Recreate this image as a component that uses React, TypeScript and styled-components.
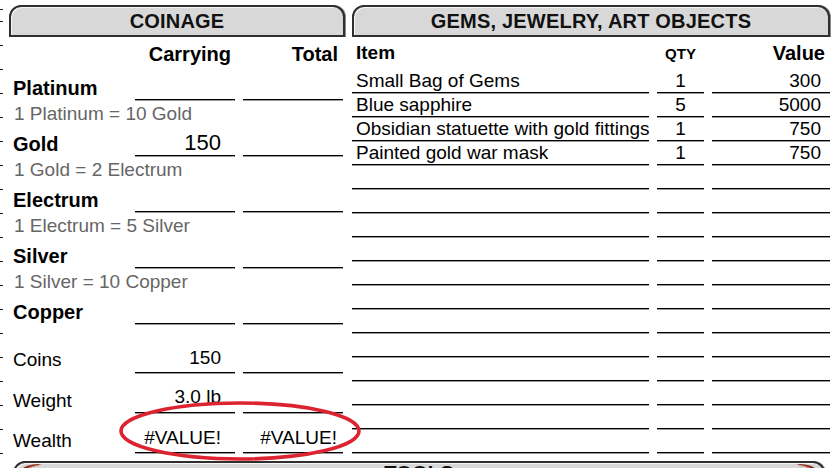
import React from 'react';
import styled, { createGlobalStyle } from 'styled-components';

const GlobalStyle = createGlobalStyle`
  html, body {
    margin: 0;
    padding: 0;
    background: #ffffff;
    width: 840px;
    height: 468px;
    overflow: hidden;
  }
  body {
    font-family: "Liberation Sans", Arial, sans-serif;
    color: #000;
  }
`;

const Page = styled.div`
  display: flex;
  width: 840px;
  height: 468px;
  overflow: hidden;
  position: relative;
`;

const TickStrip = styled.div`
  width: 3px;
  margin-right: 6px;
  flex-shrink: 0;
  background-image: repeating-linear-gradient(
    to bottom,
    #222 0,
    #222 1px,
    transparent 1px,
    transparent 24px
  );
  background-position: 0 21px;
`;

const Sheet = styled.div`
  display: flex;
  flex-direction: column;
  padding-top: 5px;
`;

const Columns = styled.div`
  display: flex;
  gap: 7px;
`;

const Panel = styled.section<{ $width: number }>`
  width: ${p => p.$width}px;
  display: flex;
  flex-direction: column;
`;

const SectionHeader = styled.div`
  box-sizing: border-box;
  height: 32px;
  background: #d8d8d8;
  border: 2px solid #2f2f2f;
  border-radius: 12px 12px 0 0;
  box-shadow: inset 1px 1px 0 #f6f6f6, 1px 0 0 #8a8a8a;
  display: flex;
  align-items: center;
  justify-content: center;
  font-weight: bold;
  font-size: 20px;
  letter-spacing: 0.2px;
  color: #111;
`;

const BottomHeader = styled(SectionHeader)`
  width: 812px;
  margin: 8px 0 0 4px;
  position: relative;
  align-items: flex-start;
  line-height: 20px;
`;

const Ornament = styled.svg<{ $side: 'left' | 'right' }>`
  position: absolute;
  top: 0;
  ${p => (p.$side === 'left' ? 'left: 4px;' : 'right: 4px; transform: scaleX(-1);')}
`;

/* ---------- coinage ---------- */

const CoinGrid = styled.div<{ $h: number; $align?: string }>`
  display: grid;
  grid-template-columns: 118px 100px 100px;
  column-gap: 8px;
  height: ${p => p.$h}px;
  align-items: ${p => p.$align || 'end'};
`;

const ColHead = styled.div<{ $pr: number }>`
  text-align: right;
  font-weight: bold;
  font-size: 20px;
  padding-right: ${p => p.$pr}px;
`;

const CoinName = styled.div<{ $bold?: boolean; $lh?: number }>`
  padding-left: 4px;
  font-size: ${p => (p.$bold ? 20 : 19)}px;
  font-weight: ${p => (p.$bold ? 'bold' : 'normal')};
  line-height: ${p => p.$lh || 24}px;
  white-space: nowrap;
`;

const Blank = styled.div<{ $pr?: number; $size?: number; $lh?: number }>`
  border-bottom: 1px solid #000;
  box-shadow: 0 1px 0 #9a9a9a;
  text-align: right;
  padding-right: ${p => p.$pr ?? 14}px;
  font-size: ${p => p.$size || 19}px;
  line-height: ${p => p.$lh || 24}px;
  min-height: ${p => p.$lh || 24}px;
  white-space: nowrap;
`;

const Rate = styled.div`
  height: 27px;
  line-height: 27px;
  padding-left: 5px;
  font-size: 19px;
  color: #666;
`;

const WealthRow = styled(CoinGrid)`
  position: relative;
`;

const Circle = styled.svg`
  position: absolute;
  left: 110px;
  top: -12px;
  overflow: visible;
  pointer-events: none;
`;

/* ---------- gems ---------- */

const ItemGrid = styled.div<{ $h: number }>`
  display: grid;
  grid-template-columns: 297px 47px 118px;
  column-gap: 8px;
  height: ${p => p.$h}px;
  align-items: end;
`;

const ItemHead = styled.div<{ $align: string; $size?: number; $pad?: string }>`
  align-self: center;
  font-weight: bold;
  font-size: ${p => p.$size || 20}px;
  text-align: ${p => p.$align};
  padding: ${p => p.$pad || '0'};
`;

const ItemCell = styled.div<{ $align: string; $pad?: string }>`
  height: 24px;
  box-sizing: border-box;
  border-bottom: 1px solid #000;
  box-shadow: 0 1px 0 #9a9a9a;
  font-size: 19px;
  line-height: 23px;
  text-align: ${p => p.$align};
  padding: ${p => p.$pad || '0'};
  white-space: nowrap;
`;

type Coin = { name: string; rate?: string; carrying?: string };

const coins: Coin[] = [
  { name: 'Platinum', rate: '1 Platinum = 10 Gold' },
  { name: 'Gold', rate: '1 Gold = 2 Electrum', carrying: '150' },
  { name: 'Electrum', rate: '1 Electrum = 5 Silver' },
  { name: 'Silver', rate: '1 Silver = 10 Copper' },
  { name: 'Copper' },
];

const items = [
  { name: 'Small Bag of Gems', qty: '1', value: '300' },
  { name: 'Blue sapphire', qty: '5', value: '5000' },
  { name: 'Obsidian statuette with gold fittings', qty: '1', value: '750' },
  { name: 'Painted gold war mask', qty: '1', value: '750' },
];

const rows = [...items, ...Array.from({ length: 12 }, () => ({ name: '', qty: '', value: '' }))];

const Swoosh: React.FC<{ side: 'left' | 'right' }> = ({ side }) => (
  <Ornament $side={side} width="24" height="8" viewBox="0 0 24 8">
    <path d="M1 8 C5 3 11 1 23 1 C16 2.5 10 4.5 7 8 Z" fill="#8a2b1c" />
    <path d="M5 8 C8 5 13 3 20 2.5" stroke="#c9876f" strokeWidth="1" fill="none" />
  </Ornament>
);

const App: React.FC = () => {
  return (
    <Page>
      <GlobalStyle />
      <TickStrip />
      <Sheet>
        <Columns>
          <Panel $width={336}>
            <SectionHeader>COINAGE</SectionHeader>
            <CoinGrid $h={34} $align="center">
              <div />
              <ColHead $pr={4}>Carrying</ColHead>
              <ColHead $pr={5}>Total</ColHead>
            </CoinGrid>

            {coins.map(c => (
              <React.Fragment key={c.name}>
                <CoinGrid $h={29}>
                  <CoinName $bold>{c.name}</CoinName>
                  <Blank $size={c.carrying ? 22 : 19}>{c.carrying}</Blank>
                  <Blank />
                </CoinGrid>
                {c.rate && <Rate>{c.rate}</Rate>}
              </React.Fragment>
            ))}

            <CoinGrid $h={49}>
              <CoinName $lh={26}>Coins</CoinName>
              <Blank $lh={28}>150</Blank>
              <Blank $lh={28} />
            </CoinGrid>
            <CoinGrid $h={40}>
              <CoinName $lh={24}>Weight</CoinName>
              <Blank $lh={30}>3.0 lb</Blank>
              <Blank $lh={30} />
            </CoinGrid>
            <WealthRow $h={40}>
              <CoinName $lh={25}>Wealth</CoinName>
              <Blank $lh={29}>#VALUE!</Blank>
              <Blank $lh={29} $pr={6}>#VALUE!</Blank>
              <Circle width="242" height="60" viewBox="0 0 242 60">
                <ellipse cx="121" cy="30" rx="119" ry="28" fill="none" stroke="#dc2430" strokeWidth="3.6" />
              </Circle>
            </WealthRow>
          </Panel>

          <Panel $width={478}>
            <SectionHeader>GEMS, JEWELRY, ART OBJECTS</SectionHeader>
            <ItemGrid $h={32}>
              <ItemHead $align="left" $pad="0 0 0 4px" $size={19}>Item</ItemHead>
              <ItemHead $align="center" $size={15}>QTY</ItemHead>
              <ItemHead $align="right" $pad="0 5px 0 0">Value</ItemHead>
            </ItemGrid>
            {rows.map((r, i) => (
              <ItemGrid $h={24} key={i}>
                <ItemCell $align="left" $pad="0 0 0 4px">{r.name}</ItemCell>
                <ItemCell $align="center">{r.qty}</ItemCell>
                <ItemCell $align="right" $pad="0 9px 0 0">{r.value}</ItemCell>
              </ItemGrid>
            ))}
          </Panel>
        </Columns>

        <BottomHeader>
          <Swoosh side="left" />
          TOOLS
          <Swoosh side="right" />
        </BottomHeader>
      </Sheet>
    </Page>
  );
};

export default App;
